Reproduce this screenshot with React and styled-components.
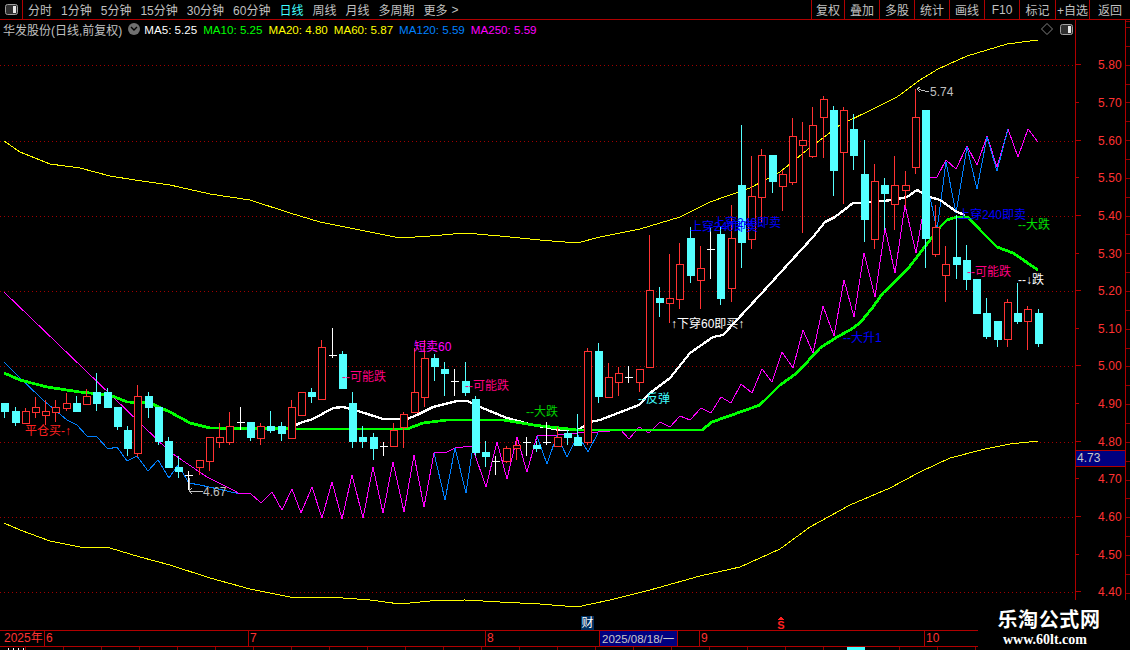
import styled, { createGlobalStyle } from 'styled-components';

const leftMenu = ["分时", "1分钟", "5分钟", "15分钟", "30分钟", "60分钟", "日线", "周线", "月线", "多周期", "更多"];
const rightMenu = [["复权", 33], ["叠加", 35], ["多股", 35], ["统计", 35], ["画线", 35], ["F10", 35], ["标记", 36], ["+自选", 34], ["返回", 41]];
const legend = [
    ["MA5: 5.25", "#ffffff"], ["MA10: 5.25", "#00ff00"], ["MA20: 4.80", "#ffff00"],
    ["MA60: 5.87", "#ffff00"], ["MA120: 5.59", "#0080ff"], ["MA250: 5.59", "#ff00ff"],
];
const prices = ["5.80", "5.70", "5.60", "5.50", "5.40", "5.30", "5.20", "5.10", "5.00", "4.90", "4.80", "4.70", "4.60", "4.50", "4.40"];
const months = [["2025年", 45], ["6", 204], ["7", 237], ["8", 214], ["9", 225], ["10", 205]];

// type, wick top, body top, body bottom, wick bottom (pixels of the page)
const candles = [
    ["c", 403, 403, 411, 418], ["c", 407, 411, 422, 426], ["r", 408, 411, 423, 423], ["r", 397, 407, 412, 418],
    ["r", 400, 411, 415, 425], ["r", 400, 407, 412, 422], ["r", 393, 403, 408, 411], ["c", 396, 403, 411, 411],
    ["r", 389, 396, 404, 404], ["c", 373, 392, 403, 411], ["c", 388, 392, 407, 407], ["c", 407, 407, 426, 430],
    ["c", 426, 430, 448, 456], ["r", 385, 396, 453, 457], ["c", 392, 396, 407, 418], ["c", 407, 407, 441, 445],
    ["c", 437, 441, 467, 467], ["c", 456, 467, 471, 478], ["w", 471, 475, 475, 490], ["r", 460, 460, 467, 475],
    ["r", 437, 437, 461, 471], ["r", 423, 437, 442, 448], ["r", 412, 426, 442, 445], ["w", 407, 422, 422, 430],
    ["c", 422, 422, 437, 441], ["r", 423, 426, 438, 445], ["c", 411, 426, 430, 433], ["c", 422, 426, 433, 441],
    ["r", 400, 407, 438, 438], ["r", 392, 392, 415, 415], ["c", 388, 392, 396, 403], ["r", 340, 347, 399, 399],
    ["w", 328, 355, 355, 358], ["c", 351, 354, 388, 388], ["c", 392, 403, 441, 448], ["c", 426, 437, 441, 448],
    ["c", 433, 437, 448, 460], ["w", 442, 446, 446, 456], ["r", 423, 430, 446, 446], ["r", 412, 414, 427, 448],
    ["r", 348, 392, 412, 412], ["r", 340, 358, 397, 407], ["c", 354, 358, 366, 381], ["c", 362, 369, 373, 396],
    ["w", 369, 381, 381, 396], ["c", 362, 381, 392, 396], ["c", 396, 399, 452, 456], ["c", 441, 452, 456, 467],
    ["w", 456, 461, 461, 475], ["r", 446, 448, 461, 463], ["r", 440, 445, 448, 460], ["w", 437, 442, 442, 456],
    ["c", 441, 445, 448, 452], ["w", 422, 442, 442, 445], ["r", 427, 437, 446, 446], ["c", 430, 433, 437, 445],
    ["c", 414, 437, 445, 445], ["r", 348, 351, 442, 445], ["c", 343, 351, 396, 403], ["r", 363, 377, 397, 397],
    ["r", 367, 373, 382, 396], ["w", 366, 377, 377, 383], ["r", 369, 369, 382, 392], ["r", 235, 290, 367, 367],
    ["c", 287, 298, 302, 317], ["r", 254, 298, 303, 323], ["r", 243, 264, 299, 309], ["c", 227, 238, 275, 283],
    ["r", 246, 268, 280, 309], ["w", 227, 249, 249, 279], ["c", 227, 234, 298, 305], ["r", 205, 238, 288, 302],
    ["c", 125, 185, 242, 268], ["r", 156, 196, 239, 249], ["r", 149, 155, 197, 223], ["c", 155, 155, 181, 193],
    ["r", 170, 174, 186, 211], ["r", 118, 136, 182, 185], ["r", 122, 140, 145, 233], ["r", 107, 125, 156, 158],
    ["r", 96, 99, 117, 158], ["c", 106, 110, 170, 196], ["r", 107, 110, 152, 204], ["c", 114, 129, 155, 170],
    ["c", 140, 174, 219, 242], ["r", 164, 181, 239, 249], ["c", 178, 185, 193, 230], ["r", 156, 185, 204, 230],
    ["r", 171, 185, 190, 207], ["r", 89, 117, 167, 174], ["c", 110, 110, 238, 268], ["r", 205, 227, 254, 257],
    ["r", 246, 264, 275, 302], ["c", 215, 257, 264, 279], ["c", 245, 260, 279, 290], ["c", 279, 279, 313, 313],
    ["c", 298, 313, 336, 339], ["c", 321, 321, 339, 347], ["r", 299, 302, 339, 347], ["c", 283, 313, 321, 324],
    ["r", 306, 309, 321, 350], ["c", 309, 313, 343, 347],
];

const upperBand = "4,141 20,152 50,164 80,168 110,176 135,180 170,185 210,194 250,200 290,213 320,222 350,228 375,233 400,238 430,236 465,233 500,236 540,240 577,243 600,237 640,229 680,217 710,202 750,188 780,172 807,150 840,125 873,109 897,97 920,80 938,69 967,56 1007,44 1038,40";
const lowerBand = "4,523 20,530 50,541 80,547 110,548 140,557 170,565 210,578 250,589 290,597 330,597 370,600 400,604 430,601 465,600 500,602 540,604 577,607 610,600 650,590 700,576 740,567 780,549 810,527 850,505 890,488 920,472 950,458 985,449 1010,444 1038,441";
const whiteLine = "290,428 300,423 313,419 333,408 343,407 355,410 383,419 407,419 417,415 433,407 457,401 467,401 480,407 507,418 533,425 560,430 578,430 590,422 600,420 639,405 650,393 670,378 690,353 713,337 723,335 760,295 790,262 813,237 825,222 835,217 853,203 863,203 893,200 907,197 917,190 930,197 940,200 957,212 965,215";
const greenLine = "4,373 20,380 47,387 80,392 110,395 127,402 150,403 170,412 190,423 210,428 300,429 407,429 423,423 447,420 503,420 533,425 577,430 702,430 712,422 760,405 780,385 797,373 820,348 837,337 850,330 860,323 873,307 883,293 907,270 940,227 947,220 957,217 968,217 980,230 997,247 1013,253 1038,270";
const magentaLine = "4,292 85,370 113,397 170,452 207,477 233,490 240,494 250,493 261,503 272,492 282,510 292,489 301,513 312,487 322,518 332,482 342,519 352,475 363,518 373,467 383,513 393,462 404,512 414,455 424,507 434,453 447,452 455,448 472,446 486,487 497,442 507,479 517,437 527,472 537,436 557,435 577,433 598,432 610,431 620,429 629,439 639,427 649,433 660,422 670,427 680,416 690,420 701,408 711,413 721,397 731,403 741,384 752,393 762,369 772,382 782,352 793,368 803,330 813,353 823,306 834,336 844,280 854,317 864,253 875,297 885,228 895,273 905,205 916,253 923,213 930,178 937,177 946,160 956,169 967,146 977,165 987,136 997,167 1008,129 1018,157 1028,129 1038,142";
const blueLine = "4,362 12,370 43,400 67,420 77,425 87,436 97,437 108,449 117,447 127,461 137,456 148,471 158,460 169,478 178,465 189,483 200,485 227,491 240,494";
const blueZigzag = "434,453 445,500 455,448 466,493 473,446";
const blueZigzag2 = "537,436 547,464 557,435 567,457 578,435 588,452 598,433";
const blueZigzag3 = "930,197 937,230 946,162 956,213 967,147 977,189 987,137 997,171 1008,129";

const gridLines = [65, 141, 216, 291, 366, 442, 517, 592];

const labels = [
    { text: "平仓买-↑", x: 25, y: 435, color: "#ff2020" },
    { text: "4.67", x: 203, y: 496, color: "#c0c0c0" },
    { text: "--可能跌", x: 342, y: 381, color: "#ff0080" },
    { text: "短卖60", x: 414, y: 351, color: "#ff00ff" },
    { text: "--可能跌", x: 465, y: 390, color: "#ff0080" },
    { text: "--大跌", x: 526, y: 416, color: "#00d000" },
    { text: "--反弹", x: 638, y: 403, color: "#40ffff" },
    { text: "↑下穿60即买↑", x: 671, y: 328, color: "#ffffff" },
    { text: "上穿240即卖", x: 690, y: 231, color: "#0000ff" },
    { text: "上穿240即卖", x: 713, y: 227, color: "#0000ff" },
    { text: "--大升1", x: 843, y: 342, color: "#0000ff" },
    { text: "5.74", x: 930, y: 96, color: "#c0c0c0" },
    { text: "上穿240即卖", x: 958, y: 219, color: "#0000ff" },
    { text: "--可能跌", x: 967, y: 276, color: "#ff0080" },
    { text: "--大跌", x: 1018, y: 229, color: "#00e000" },
    { text: "--↓跌", x: 1018, y: 284, color: "#ffffff" },
];

function candleX(index) {
    return Math.round(4.3 + 10.23 * index);
}

function Candle({ data, index }) {
    const [type, wickTop, bodyTop, bodyBottom, wickBottom] = data;
    const x = candleX(index) + 0.5;

    if (type === "w") {
        return (
            <g stroke="#ffffff">
                <line x1={x} x2={x} y1={wickTop} y2={wickBottom} />
                <line x1={x - 4} x2={x + 4} y1={bodyTop + 0.5} y2={bodyTop + 0.5} />
            </g>
        );
    }

    const color = type === "r" ? "#ff3232" : "#54ffff";
    return (
        <g>
            <line x1={x} x2={x} y1={wickTop} y2={wickBottom} stroke={color} />
            <rect
                x={x - 3.5}
                y={bodyTop + 0.5}
                width={7}
                height={bodyBottom - bodyTop}
                fill={type === "r" ? "#000000" : color}
                stroke={color}
            />
        </g>
    );
}

function Chart() {
    return (
        <Plot viewBox="0 38 1075 592" shapeRendering="crispEdges">
            {gridLines.map(y => (
                <line key={y} x1="0" x2="1075" y1={y + 0.5} y2={y + 0.5} stroke="#a00000" strokeDasharray="1 3" shapeRendering="auto" />
            ))}
            <polyline points={upperBand} fill="none" stroke="#ffff00" />
            <polyline points={lowerBand} fill="none" stroke="#ffff00" />
            <polyline points={blueLine} fill="none" stroke="#0080ff" />
            <polyline points={magentaLine} fill="none" stroke="#ff00ff" />
            <polyline points={blueZigzag} fill="none" stroke="#0080ff" />
            <polyline points={blueZigzag2} fill="none" stroke="#0080ff" />
            <polyline points={blueZigzag3} fill="none" stroke="#0080ff" />
            <polyline points={whiteLine} fill="none" stroke="#ffffff" strokeWidth="2.3" />
            <polyline points={greenLine} fill="none" stroke="#00ff00" strokeWidth="2.8" />
            {candles.map((candle, index) => (
                <Candle key={index} data={candle} index={index} />
            ))}

            <polyline points="189,478 189,491 203,491" fill="none" stroke="#c0c0c0" />
            <polyline points="192,488 189,491 192,494" fill="none" stroke="#c0c0c0" />
            <polyline points="917,88 921,90 929,92" fill="none" stroke="#c0c0c0" />
            <polyline points="920,87 917,89 920,92" fill="none" stroke="#c0c0c0" />

            {labels.map(label => (
                <ChartLabel key={label.text + label.x} x={label.x} y={label.y} $color={label.color}>{label.text}</ChartLabel>
            ))}

            <rect x="581" y="616" width="13" height="14" fill="#003060" />
            <ChartLabel x="581.5" y="627" $color="#ffffff">财</ChartLabel>
            <polygon points="781,616 784,620 778,620" fill="#ff2020" />
            <SignalLetter x="781" y="629" textAnchor="middle">S</SignalLetter>
        </Plot>
    );
}

export default function App() {
    return (
        <Screen>
            <GlobalStyle />

            <Toolbar>
                <PanelToggle>
                    <ToggleIcon />
                </PanelToggle>
                <LeftMenu>
                    {leftMenu.map(item => (
                        <MenuItem key={item} $active={item === "日线"}>{item}</MenuItem>
                    ))}
                    <MoreArrow>&gt;</MoreArrow>
                </LeftMenu>
                <RightMenu>
                    {rightMenu.map(([item, width]) => (
                        <RightButton key={item} $width={width}>{item}</RightButton>
                    ))}
                </RightMenu>
            </Toolbar>

            <Main>
                <ChartColumn>
                    <Legend>
                        <StockName>华发股份(日线,前复权)</StockName>
                        <CircleButton>
                            <svg width="8" height="6" viewBox="0 0 8 6">
                                <polyline points="1,1 4,4 7,1" fill="none" stroke="#000000" strokeWidth="1.4" />
                            </svg>
                        </CircleButton>
                        {legend.map(([text, color]) => (
                            <LegendValue key={text} $color={color}>{text}</LegendValue>
                        ))}
                        <LegendIcons>
                            <svg width="12" height="12" viewBox="0 0 12 12">
                                <polygon points="6,0.5 11.5,6 6,11.5 0.5,6" fill="none" stroke="#808080" />
                            </svg>
                            <ToggleIcon />
                        </LegendIcons>
                    </Legend>
                    <Chart />
                </ChartColumn>

                <PriceAxis>
                    {prices.map((price, index) => (
                        <PriceRow key={price} $major={index % 2 === 0}>{price}</PriceRow>
                    ))}
                    <CurrentPrice>4.73</CurrentPrice>
                </PriceAxis>
                <Ruler />
            </Main>

            <TimeAxis>
                {months.map(([month, width]) => (
                    <MonthCell key={month} $width={width}>{month}</MonthCell>
                ))}
                <CursorDate>2025/08/18/一</CursorDate>
            </TimeAxis>
            <BottomStrip>
                <WhiteStub />
                <CyanStub />
            </BottomStrip>

            <Watermark>
                <WatermarkTitle>乐淘公式网</WatermarkTitle>
                <WatermarkUrl>www.60lt.com</WatermarkUrl>
            </Watermark>
        </Screen>
    );
}

function ToggleIcon() {
    return (
        <svg width="13" height="11" viewBox="0 0 13 11">
            <rect x="0.5" y="0.5" width="12" height="10" rx="2" fill="#303030" stroke="#a0a0a0" />
            <rect x="8" y="2" width="3" height="7" fill="#e8e8e8" />
        </svg>
    );
}

const red = "#b00000";

const GlobalStyle = createGlobalStyle`
    * {
        box-sizing: border-box;
    }

    html, body {
        margin: 0;
        background-color: #000000;
    }
`

const Screen = styled.div`
    position: relative;
    display: flex;
    flex-direction: column;
    width: 1130px;
    height: 650px;
    overflow: hidden;
    background-color: #000000;
    color: #c0c0c0;
    font-family: "Liberation Sans", "Noto Sans CJK SC", sans-serif;
    font-size: 12px;
`

const Toolbar = styled.div`
    display: flex;
    height: 20px;
    border-bottom: 1px solid ${red};
`

const PanelToggle = styled.div`
    display: flex;
    align-items: center;
    justify-content: center;
    width: 23px;
    border-right: 1px solid ${red};
`

const LeftMenu = styled.div`
    display: flex;
    align-items: center;
    gap: 9px;
    padding-left: 5px;
`

const MenuItem = styled.span`
    color: ${props => props.$active ? "#40ffff" : "#c0c0c0"};
`

const MoreArrow = styled.span`
    margin-left: -5px;
`

const RightMenu = styled.div`
    display: flex;
    margin-left: auto;
`

const RightButton = styled.div`
    display: flex;
    align-items: center;
    justify-content: center;
    width: ${props => props.$width}px;
    border-left: 1px solid ${red};
`

const Main = styled.div`
    display: flex;
    height: 610px;
`

const ChartColumn = styled.div`
    display: flex;
    flex-direction: column;
    width: 1075px;
`

const Legend = styled.div`
    display: flex;
    align-items: center;
    height: 18px;
    padding-left: 3px;
`

const StockName = styled.span`
    color: #c0c0c0;
    white-space: nowrap;
`

const CircleButton = styled.span`
    display: flex;
    align-items: center;
    justify-content: center;
    width: 12px;
    height: 12px;
    margin: 0 4px 0 6px;
    border-radius: 50%;
    background-color: #707070;
`

const LegendValue = styled.span`
    margin-right: 6px;
    color: ${props => props.$color};
    white-space: nowrap;
    font-size: 11.6px;
`

const LegendIcons = styled.span`
    display: flex;
    align-items: center;
    gap: 7px;
    margin-left: auto;
    margin-right: 2px;
`

const Plot = styled.svg`
    display: block;
    width: 1075px;
    height: 592px;
`

const ChartLabel = styled.text`
    font-family: "Liberation Sans", "Noto Sans CJK SC", sans-serif;
    font-size: 12px;
    fill: ${props => props.$color};
`

const SignalLetter = styled.text`
    font-family: "Liberation Sans", sans-serif;
    font-size: 11px;
    font-weight: bold;
    fill: #ff2020;
`

const PriceAxis = styled.div`
    position: relative;
    display: flex;
    flex-direction: column;
    width: 51px;
    padding-top: 26.4px;
    border-left: 1px solid ${red};
    border-right: 1px solid ${red};
`

const PriceRow = styled.div`
    position: relative;
    flex: none;
    height: 37.64px;
    line-height: 39px;
    padding-left: 22px;
    color: #ff3232;
    letter-spacing: 0.1px;

    &::before {
        content: "";
        position: absolute;
        left: 0;
        top: 18px;
        width: ${props => props.$major ? 5 : 3}px;
        height: 1px;
        background-color: ${red};
    }
`

const CurrentPrice = styled.div`
    position: absolute;
    left: 0;
    top: 430px;
    width: 49px;
    height: 17px;
    padding-left: 1px;
    line-height: 15px;
    border-top: 1px solid ${red};
    border-bottom: 1px solid ${red};
    background-color: #000080;
    color: #c8c8c8;
`

const Ruler = styled.div`
    width: 4px;
    background-image: repeating-linear-gradient(to bottom, #900000 0, #900000 1px, transparent 1px, transparent 18.86px);
    background-position: 0 7px;
`

const TimeAxis = styled.div`
    position: relative;
    display: flex;
    height: 17px;
    border-top: 1px solid ${red};
    border-bottom: 1px solid ${red};
`

const MonthCell = styled.div`
    flex: none;
    width: ${props => props.$width}px;
    padding-left: ${props => props.$width === 45 ? 4 : 1}px;
    line-height: 15px;
    color: #ff3232;
    border-right: 1px solid ${red};

    &:last-of-type {
        border-right: none;
    }
`

const CursorDate = styled.div`
    position: absolute;
    left: 599px;
    top: -1px;
    width: 79px;
    height: 17px;
    padding-left: 2px;
    line-height: 16px;
    border: 1px solid ${red};
    background-color: #000080;
    color: #c8c8c8;
    font-size: 11.5px;
    white-space: nowrap;
`

const BottomStrip = styled.div`
    display: flex;
    align-items: flex-start;
    height: 3px;
    background-image: repeating-linear-gradient(to right, #900000 0, #900000 1px, transparent 1px, transparent 38px);
    background-position: 25px 0;
`

const WhiteStub = styled.div`
    width: 16px;
    height: 2px;
    margin: 1px 0 0 8px;
    background-image: repeating-linear-gradient(to right, #ffffff 0, #ffffff 1px, transparent 1px, transparent 5px);
`

const CyanStub = styled.div`
    width: 18px;
    height: 3px;
    margin-left: 823px;
    background-color: #40ffff;
`

const Watermark = styled.div`
    position: absolute;
    left: 978px;
    top: 600px;
    display: flex;
    flex-direction: column;
    align-items: center;
    width: 152px;
    height: 50px;
    padding: 5px 10px 0 0;
    background-color: #000000;
    color: #ffffff;
`

const WatermarkTitle = styled.div`
    font-family: "Noto Sans CJK SC", sans-serif;
    font-size: 20px;
    font-weight: 700;
    line-height: 27px;
    letter-spacing: 0.6px;
`

const WatermarkUrl = styled.div`
    margin-right: 8px;
    font-family: "Liberation Serif", serif;
    font-size: 14px;
    font-weight: 700;
    line-height: 16px;
`
